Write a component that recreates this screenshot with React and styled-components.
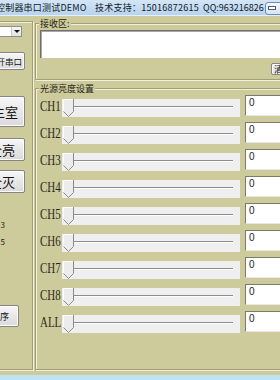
import styled, { createGlobalStyle } from 'styled-components';

const Global = createGlobalStyle`
  html, body { margin: 0; padding: 0; background: #cdca9c; }
  body { width: 280px; height: 380px; overflow: hidden; }
`;

const Viewport = styled.div`
  width: 280px;
  height: 380px;
  overflow: hidden;
`;

const Window = styled.div`
  box-sizing: border-box;
  width: 340px;
  height: 380px;
  margin-left: -30px;
  display: flex;
  flex-direction: column;
  background: #cdca9c;
  border-bottom: 5px solid #bfe3f2;
  font-family: "Noto Sans CJK SC", "Noto Sans", sans-serif;
  color: #1f1f16;
`;

const TitleBar = styled.div`
  flex: none;
  height: 15px;
  display: flex;
  align-items: center;
  padding-left: 26px;
  background: linear-gradient(#d4e6f7, #b6d3ef);
  border-bottom: 1px solid #e6eef6;
  font-size: 9px;
  line-height: 12px;
  white-space: nowrap;
  color: #151a22;
`;

const TitleText = styled.span`
  flex: none;
  width: ${(p) => p.$w}px;
  letter-spacing: ${(p) => p.$ls || 0}px;
  overflow: hidden;
`;

const MinButton = styled.div`
  flex: none;
  box-sizing: border-box;
  width: 26px;
  height: 13px;
  margin-top: 1px;
  border: 1px solid #6e8db0;
  border-radius: 3px;
  background: linear-gradient(#f4f8fc, #d6e4f2);
  display: flex;
  align-items: center;
  padding-left: 2px;

  &::after {
    content: '';
    width: 6px;
    height: 2px;
    background: #fff;
    border: 1px solid #4c5f78;
  }
`;

const Main = styled.div`
  flex: 1;
  display: flex;
  align-items: flex-start;
  gap: 2px;
`;

const etched = `
  border: 1px solid #a29f78;
  box-shadow: inset 1px 1px 0 #f1efd9, 1px 1px 0 #f1efd9;
`;

const LeftPanel = styled.div`
  box-sizing: border-box;
  flex: none;
  width: 63px;
  height: 349px;
  margin-top: 5px;
  ${etched}
  border-left: none;
  display: flex;
  flex-direction: column;
  align-items: flex-end;
`;

const Combo = styled.div`
  box-sizing: border-box;
  width: 45px;
  height: 11px;
  margin: 4px 10px 0 0;
  background: #fff;
  border: 1px solid #8f8f8f;
  display: flex;
  justify-content: flex-end;
`;

const ComboArrow = styled.div`
  width: 9px;
  background: linear-gradient(#f7f7f7, #e2e2e2);
  border-left: 1px solid #c8c8c8;
  display: flex;
  align-items: center;
  justify-content: center;

  &::after {
    content: '';
    border-left: 3px solid transparent;
    border-right: 3px solid transparent;
    border-top: 3px solid #111;
  }
`;

const Button = styled.div`
  box-sizing: border-box;
  width: ${(p) => p.$w}px;
  height: ${(p) => p.$h}px;
  margin-top: ${(p) => p.$mt}px;
  margin-right: ${(p) => p.$mr}px;
  padding-right: ${(p) => p.$pr}px;
  border: 1px solid #858585;
  border-radius: 2px;
  background: linear-gradient(#f7f7f7, #e6e6e6 55%, #dadada);
  box-shadow: inset 0 0 0 1px #fdfdfd;
  display: flex;
  align-items: center;
  justify-content: flex-end;
  font-size: ${(p) => p.$fs}px;
  white-space: nowrap;
  color: #111;
`;

const Info = styled.div`
  width: 40px;
  margin-right: 27px;
  font-size: 8px;
  line-height: 9px;
  text-align: right;
  white-space: nowrap;
  margin-top: ${(p) => p.$mt}px;
`;

const RightPanel = styled.div`
  flex: 1;
  display: flex;
  flex-direction: column;
`;

const GroupBox = styled.div`
  box-sizing: border-box;
  margin-top: ${(p) => p.$mt}px;
  ${etched}
  border-right: none;
  padding: 0 4px ${(p) => p.$pb}px 4px;
  display: flex;
  flex-direction: column;
`;

const GroupTitle = styled.div`
  align-self: flex-start;
  margin: -6px 0 0 -1px;
  padding: 0 1px;
  background: #cdca9c;
  font-size: 9px;
  line-height: 11px;
  color: #1f1f16;
`;

const ReceiveArea = styled.div`
  box-sizing: border-box;
  height: 28px;
  margin-top: 1px;
  background: #fff;
  border-top: 1px solid #6f6f6f;
  border-left: 1px solid #6f6f6f;
  box-shadow: inset 1px 1px 0 #a8a8a8;
`;

const ClearButton = styled(Button)`
  align-self: flex-end;
  justify-content: flex-start;
  padding-left: 2px;
`;

const Rows = styled.div`
  margin-top: 1px;
  display: flex;
  flex-direction: column;
`;

const Row = styled.div`
  height: 27px;
  display: flex;
  align-items: flex-start;
`;

const Label = styled.div`
  flex: none;
  width: 22px;
  margin-top: 4px;
  font-family: "Liberation Serif", serif;
  font-size: 14px;
  line-height: 16px;
  color: #2a2a1c;
  white-space: nowrap;
  transform: scaleX(0.78);
  transform-origin: left center;
`;

const SliderBox = styled.div`
  flex: none;
  width: 178px;
  height: 18px;
  margin-top: 4px;
  background: #efefef;
  display: flex;
  align-items: flex-start;
`;

const Thumb = styled.svg`
  flex: none;
  margin-left: 1px;
`;

const Track = styled.div`
  flex: 1;
  height: 0;
  margin: 7px 7px 0 0;
  border-top: 1px solid #8c8c8c;
  border-bottom: 1px solid #fff;
`;

const Edit = styled.div`
  box-sizing: border-box;
  flex: none;
  width: 40px;
  height: 21px;
  margin-left: 5px;
  padding: 1px 3px;
  background: #fff;
  border-top: 1px solid #7b7b6a;
  border-left: 1px solid #7b7b6a;
  border-bottom: 1px solid #e8e8e8;
  font-family: "Liberation Sans", Arial, sans-serif;
  font-size: 10px;
  line-height: 12px;
  color: #222;
`;

const channels = ['CH1', 'CH2', 'CH3', 'CH4', 'CH5', 'CH6', 'CH7', 'CH8', 'ALL'];

function Slider() {
  return (
    <SliderBox>
      <Thumb width="11" height="18" viewBox="0 0 11 18">
        <path d="M0.5 12.5V0.5H10.5V12.5L5.5 17.5Z" fill="#ececec" />
        <path d="M0.5 12.5V0.5H10" stroke="#fff" fill="none" />
        <path d="M10.5 0V12.5L5.5 17.5L0.5 12.5" stroke="#8a8a8a" fill="none" />
      </Thumb>
      <Track />
    </SliderBox>
  );
}

export default function App() {
  return (
    <Viewport>
      <Global />
      <Window>
        <TitleBar>
          <TitleText $w={99} $ls={0.2}>控制器串口测试DEMO</TitleText>
          <TitleText $w={108} $ls={0.25}>技术支持：15016872615</TitleText>
          <TitleText $w={62}>QQ:963216826</TitleText>
          <MinButton />
        </TitleBar>
        <Main>
          <LeftPanel>
            <Combo>
              <ComboArrow />
            </Combo>
            <Button $w={40} $h={18} $mt={15} $mr={7} $pr={2} $fs={8.5}>打开串口</Button>
            <Button $w={46} $h={31} $mt={26} $mr={7} $pr={6} $fs={13}>主室</Button>
            <Button $w={46} $h={23} $mt={11} $mr={7} $pr={9} $fs={13}>全亮</Button>
            <Button $w={46} $h={23} $mt={9} $mr={7} $pr={9} $fs={13}>全灭</Button>
            <Info $mt={27}>端口：3</Info>
            <Info $mt={8}>通道：5</Info>
            <Button $w={40} $h={22} $mt={59} $mr={13} $pr={9} $fs={9}>排序</Button>
          </LeftPanel>
          <RightPanel>
            <GroupBox $mt={7} $pb={4}>
              <GroupTitle>接收区:</GroupTitle>
              <ReceiveArea />
              <ClearButton $w={35} $h={12} $mt={5} $mr={0} $pr={0} $fs={9}>清空</ClearButton>
            </GroupBox>
            <GroupBox $mt={8} $pb={31}>
              <GroupTitle>光源亮度设置</GroupTitle>
              <Rows>
                {channels.map((ch) => (
                  <Row key={ch}>
                    <Label>{ch}</Label>
                    <Slider />
                    <Edit>0</Edit>
                  </Row>
                ))}
              </Rows>
            </GroupBox>
          </RightPanel>
        </Main>
      </Window>
    </Viewport>
  );
}
